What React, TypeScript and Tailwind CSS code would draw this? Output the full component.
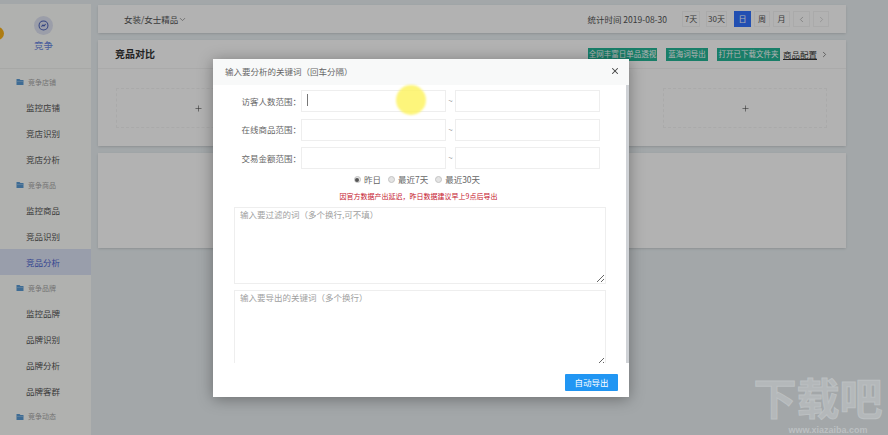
import { ChevronDown, ChevronLeft, ChevronRight, Plus, X } from 'lucide-react'

const menu = [
  { title: '竞争店铺', items: ['监控店铺', '竞店识别', '竞店分析'] },
  { title: '竞争商品', items: ['监控商品', '竞品识别', '竞品分析'] },
  { title: '竞争品牌', items: ['监控品牌', '品牌识别', '品牌分析', '品牌客群'] },
  { title: '竞争动态', items: [] as string[] },
]

const ranges = ['访客人数范围：', '在线商品范围：', '交易金额范围：']

function FolderIcon() {
  return (
    <svg viewBox="0 0 16 16" className="h-[8px] w-[8px] shrink-0">
      <path d="M1 2h6l2 2h6v10H1z" fill="#5b9bd5" />
      <path d="M1 7h14v1H1z" fill="#a9cbe8" />
    </svg>
  )
}

function Sidebar() {
  return (
    <aside className="mt-[4px] w-[91px] shrink-0 bg-[#fdfefb]">
      <div className="relative flex h-[65px] flex-col items-center border-b border-[#f0f1ee] pt-[12px]">
        <span className="absolute top-[23px] left-[-9px] h-[13px] w-[13px] rounded-full bg-[#f9b21b]" />
        <span className="ml-[-4px] flex h-[19px] w-[19px] items-center justify-center rounded-full bg-[#dfe3f2]">
          <svg viewBox="0 0 16 16" className="h-[11px] w-[11px]" fill="none" stroke="#4a62b8" strokeWidth="1.5">
            <circle cx="8" cy="8" r="6.5" />
            <path d="M5 9.5 7.2 7.3l1.5 1.4L11 6" />
          </svg>
        </span>
        <span className="mt-[4px] ml-[-4px] text-[9.5px] leading-[12px] text-[#6a86e0]">竞争</span>
      </div>
      {menu.map(group => (
        <div key={group.title}>
          <div className="flex h-[25.75px] items-center gap-[4px] pl-[16px] text-[7px] text-[#a6a6a6]">
            <FolderIcon />
            <span>{group.title}</span>
          </div>
          {group.items.map(item => (
            <div
              key={item}
              className={`flex h-[25.75px] items-center pl-[26px] text-[8.5px] ${
                item === '竞品分析' ? 'bg-[#dce3f5] text-[#4a62d0]' : 'text-[#555555]'
              }`}
            >
              {item}
            </div>
          ))}
        </div>
      ))}
    </aside>
  )
}

function Toolbar() {
  return (
    <header className="flex h-[28px] items-center justify-between bg-white pr-[17px] pl-[26px] text-[8.5px] text-[#555555] shadow-sm">
      <div className="flex items-center">
        女装/女士精品
        <ChevronDown className="h-[9px] w-[9px] text-[#888888]" />
      </div>
      <div className="flex items-center">
        <span className="mr-[15px]">统计时间 2019-08-30</span>
        <div className="flex items-center gap-[3px] text-[8px]">
          <span className="flex h-[16px] w-[18px] items-center justify-center border border-[#f4f4f4]">7天</span>
          <span className="ml-[3px] flex h-[16px] w-[21px] items-center justify-center border border-[#f4f4f4]">30天</span>
          <span className="ml-[4px] flex h-[16px] w-[17px] items-center justify-center bg-[#3272ff] text-white">日</span>
          <span className="flex h-[16px] w-[16px] items-center justify-center border border-[#f4f4f4]">周</span>
          <span className="flex h-[16px] w-[17px] items-center justify-center border border-[#f4f4f4]">月</span>
          <span className="flex h-[16px] w-[17px] items-center justify-center border border-[#f4f4f4] text-[#aaaaaa]">
            <ChevronLeft className="h-[9px] w-[9px]" />
          </span>
          <span className="flex h-[16px] w-[16px] items-center justify-center border border-[#f4f4f4] text-[#cccccc]">
            <ChevronRight className="h-[9px] w-[9px]" />
          </span>
        </div>
      </div>
    </header>
  )
}

function ComparePanel() {
  return (
    <section className="h-[106px] bg-white shadow-sm">
      <div className="flex h-[29px] items-center justify-between border-b border-[#f4f4f4] pr-[17px] pl-[17px]">
        <h2 className="mb-[1px] text-[10px] font-bold text-[#333333]">竞品对比</h2>
        <div className="flex items-center text-[7.5px] text-white">
          <span className="flex h-[13px] w-[69px] items-center justify-center overflow-hidden whitespace-nowrap bg-[#24b596]">全网丰富日单品透视</span>
          <span className="ml-[9px] flex h-[13px] w-[42px] items-center justify-center bg-[#24b596]">蓝海词导出</span>
          <span className="ml-[9px] flex h-[13px] w-[63px] items-center justify-center whitespace-nowrap bg-[#24b596]">打开已下载文件夹</span>
          <span className="ml-[3px] text-[8.5px] text-[#333333] underline">商品配置</span>
          <ChevronRight className="ml-[3px] h-[9px] w-[9px] text-[#666666]" />
        </div>
      </div>
      <div className="flex justify-between pt-[19px] pr-[19px] pl-[18px]">
        {[0, 1, 2].map(i => (
          <div key={i} className="flex h-[40px] w-[164px] items-center justify-center border border-dashed border-[#f4f4f4] text-[#444444]">
            <Plus className="h-[9px] w-[9px]" strokeWidth={1.5} />
          </div>
        ))}
      </div>
    </section>
  )
}

function Radio({ label, checked }: { label: string; checked?: boolean }) {
  return (
    <span className="flex items-center gap-[3px]">
      <span className="flex h-[7px] w-[7px] items-center justify-center rounded-full border border-[#c4c4c4] bg-[#e4e4e4]">
        {checked && <span className="h-[4px] w-[4px] rounded-full bg-[#555555]" />}
      </span>
      {label}
    </span>
  )
}

function KeywordDialog() {
  return (
    <div className="absolute top-[59px] left-[213px] flex h-[338px] w-[416px] flex-col bg-white shadow-[0_2px_14px_rgba(0,0,0,0.35)]">
      <div className="flex h-[26px] shrink-0 items-center justify-between bg-[#f8f9f9] pr-[9px] pb-[2px] pl-[12px] text-[8.5px] text-[#666666]">
        <span>输入要分析的关键词（回车分隔）</span>
        <X className="h-[10px] w-[10px] text-[#444444]" strokeWidth={2.5} />
      </div>
      <div className="h-[278px] shrink-0 overflow-hidden pt-[5px] pr-[23px] pl-[21px]">
        <div className="flex flex-col gap-[6.5px]">
          {ranges.map(label => (
            <div key={label} className="flex items-center">
              <label className="w-[67px] text-right text-[8.5px] whitespace-nowrap text-[#666666]">{label}</label>
              <input className="h-[22px] w-[145px] border border-[#eeeeee] bg-white outline-none" />
              <span className="w-[9px] text-center text-[8px] text-[#999999]">~</span>
              <input className="h-[22px] w-[145px] border border-[#eeeeee] bg-white outline-none" />
            </div>
          ))}
        </div>
        <div className="mt-[5px] flex h-[11px] items-center justify-center gap-[7px] pr-[6px] text-[8.5px] text-[#666666]">
          <Radio label="昨日" checked />
          <Radio label="最近7天" />
          <Radio label="最近30天" />
        </div>
        <p className="mt-[5px] h-[12px] pr-[3px] text-center text-[7px] leading-[12px] text-[#c5152d]">
          因官方数据产出延迟，昨日数据建议早上9点后导出
        </p>
        <textarea
          readOnly
          placeholder="输入要过滤的词（多个换行,可不填）"
          className="mt-[5px] block h-[77px] w-[372px] border border-[#eeeeee] px-[5px] text-[8.5px] outline-none placeholder:text-[#a0a0a0]"
        />
        <textarea
          readOnly
          placeholder="输入要导出的关键词（多个换行）"
          className="mt-[6px] block h-[77px] w-[372px] border border-[#eeeeee] px-[5px] text-[8.5px] outline-none placeholder:text-[#a0a0a0]"
        />
      </div>
      <div className="flex flex-1 items-start justify-end pt-[11px] pr-[11px]">
        <button className="h-[17px] w-[53px] rounded-[1px] bg-[#2196f3] text-[8.5px] text-white">自动导出</button>
      </div>
      {/* scrollbar of the dialog body */}
      <span className="absolute top-[26px] right-0 h-[278px] w-[3px] bg-[#cfd2d6]" />
      {/* text cursor + recording highlight */}
      <span className="absolute top-[35px] left-[94px] h-[12px] w-px bg-[#777777]" />
      <span className="absolute top-[26px] left-[183px] h-[30px] w-[30px] rounded-full bg-[#fdf25a]/80 blur-[1px]" />
    </div>
  )
}

export default function App() {
  return (
    <div className="relative flex h-[435px] w-[888px] overflow-hidden bg-[#eaf0f3] font-['Noto_Sans_CJK_SC','Noto_Sans',sans-serif]">
      <Sidebar />
      <main className="mt-[5px] ml-[7px] flex w-[748px] flex-col gap-[7px]">
        <Toolbar />
        <ComparePanel />
        <section className="h-[95px] bg-white shadow-sm" />
      </main>
      <div className="absolute inset-0 bg-black/30" />
      <KeywordDialog />
      {/* site watermark */}
      <div className="absolute top-[376px] left-[750px] flex w-[136px] flex-col items-center font-['Liberation_Sans','Noto_Sans_CJK_SC',sans-serif]">
        <span className="text-[43px] leading-[49px] font-bold text-[#b4b8ba] [-webkit-text-stroke:1px_#bcc0c2]">下载吧</span>
        <span className="pl-[20px] text-[9px] leading-[10px] font-bold text-[#bcc0c2]">www.xiazaiba.com</span>
      </div>
    </div>
  )
}
